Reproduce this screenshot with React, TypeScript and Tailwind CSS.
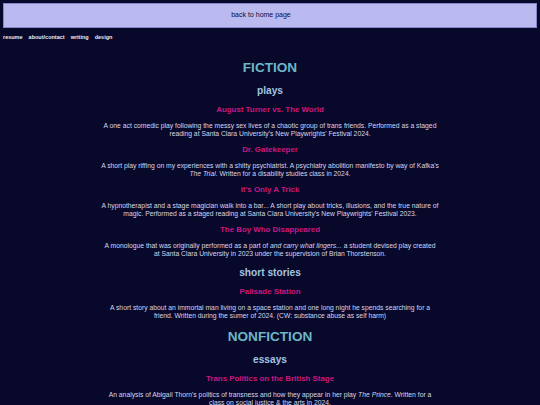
import React from "react";

type Work = { title: string; lines: [React.ReactNode, React.ReactNode] };
type Section = { heading: string; groups: { name: string; works: Work[] }[] };

// each blurb is two lines in the original layout
const sections: Section[] = [
  {
    heading: "FICTION",
    groups: [
      {
        name: "plays",
        works: [
          {
            title: "August Turner vs. The World",
            lines: [
              "A one act comedic play following the messy sex lives of a chaotic group of trans friends. Performed as a staged",
              "reading at Santa Clara University's New Playwrights' Festival 2024.",
            ],
          },
          {
            title: "Dr. Gatekeeper",
            lines: [
              "A short play riffing on my experiences with a shitty psychiatrist. A psychiatry abolition manifesto by way of Kafka's",
              <><i>The Trial</i>. Written for a disability studies class in 2024.</>,
            ],
          },
          {
            title: "It's Only A Trick",
            lines: [
              "A hypnotherapist and a stage magician walk into a bar... A short play about tricks, illusions, and the true nature of",
              "magic. Performed as a staged reading at Santa Clara University's New Playwrights' Festival 2023.",
            ],
          },
          {
            title: "The Boy Who Disappeared",
            lines: [
              <>A monologue that was originally performed as a part of <i>and carry what lingers...</i> a student devised play created</>,
              "at Santa Clara University in 2023 under the supervision of Brian Thorstenson.",
            ],
          },
        ],
      },
      {
        name: "short stories",
        works: [
          {
            title: "Palisade Station",
            lines: [
              "A short story about an immortal man living on a space station and one long night he spends searching for a",
              "friend. Written during the sumer of 2024. (CW: substance abuse as self harm)",
            ],
          },
        ],
      },
    ],
  },
  {
    heading: "NONFICTION",
    groups: [
      {
        name: "essays",
        works: [
          {
            title: "Trans Politics on the British Stage",
            lines: [
              <>An analysis of Abigail Thorn's politics of transness and how they appear in her play <i>The Prince</i>. Written for a</>,
              "class on social justice & the arts in 2024.",
            ],
          },
        ],
      },
    ],
  },
];

export default function App() {
  return (
    <div className="min-h-screen bg-[#07082a] pt-[3px] font-['Liberation_Sans',Arial,sans-serif]">
      <div className="mx-[3px] flex h-[25px] items-center justify-center border border-[#8585c8] bg-[#babaf0] pr-[18px] text-[7px] text-[#0c0c36]">
        back to home page
      </div>
      <nav className="mt-[6px] flex gap-[6px] px-[3px] text-[5.5px] font-bold leading-[6.4px] text-[#ececf6]">
        <span>resume</span>
        <span>about/contact</span>
        <span>writing</span>
        <span>design</span>
      </nav>
      <main className="pt-[10px] text-center">
        {sections.map((s) => (
          <section key={s.heading}>
            <h1 className="my-[9.5px] text-[13.6px] font-bold leading-[15.6px] text-[#6cb6c6]">{s.heading}</h1>
            {s.groups.map((g) => (
              <div key={g.name}>
                <h2 className="mt-[9.6px] mb-[8.4px] text-[10.2px] font-bold leading-[11.7px] text-[#a2c4e0]">{g.name}</h2>
                {g.works.map((w) => (
                  <div key={w.title}>
                    <h3 className="my-[7.8px] text-[7.9px] font-bold leading-[9px] text-[#cc167f]">{w.title}</h3>
                    <p className="mx-auto my-[7.8px] whitespace-nowrap text-[6.78px] leading-[7.7px] text-[#d6d6ee]">
                      {w.lines[0]}
                      <br />
                      {w.lines[1]}
                    </p>
                  </div>
                ))}
              </div>
            ))}
          </section>
        ))}
      </main>
    </div>
  );
}
